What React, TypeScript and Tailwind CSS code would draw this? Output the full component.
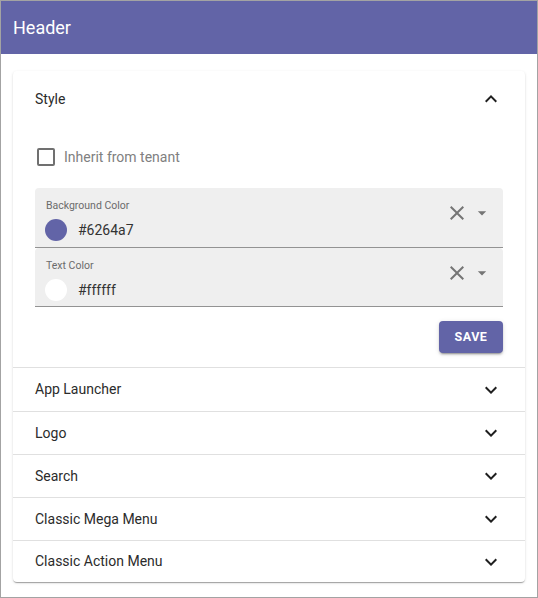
import React from "react";

const font = { fontFamily: "Roboto, 'Liberation Sans', sans-serif" };

function ChevronDown() {
  return (
    <svg width="24" height="24" viewBox="0 0 24 24" className="fill-[#1f1f1f]">
      <path d="M16.59 8.59 12 13.17 7.41 8.59 6 10l6 6 6-6z" />
    </svg>
  );
}

function ChevronUp() {
  return (
    <svg width="24" height="24" viewBox="0 0 24 24" className="fill-[#1f1f1f]">
      <path d="M12 8l-6 6 1.41 1.41L12 10.83l4.59 4.58L18 14z" />
    </svg>
  );
}

function ColorField({ label, value, swatch, tall }: { label: string; value: string; swatch: string; tall?: boolean }) {
  return (
    <div className="flex bg-[#efefef] rounded-t-[4px] border-b border-[#939393]">
      <div className={`flex-1 pl-[11px] pt-[11px] ${tall ? "pb-[6px]" : "pb-[5px]"}`}>
        <div className="text-[10.5px] leading-[13px] text-[#6b6b6b]">{label}</div>
        <div className="mt-[7px] flex items-center h-[22px]">
          <span className={`-ml-[1px] w-[22px] h-[22px] rounded-full ${swatch}`} />
          <span className="ml-[11px] text-[14px] text-[#333333]">{value}</span>
        </div>
      </div>
      <div className="flex items-center gap-[3px] pt-[13px] pr-[11px] self-start h-[37px]">
        <svg width="24" height="24" viewBox="0 0 24 24" className="fill-[#757575]">
          <path d="M19 6.41 17.59 5 12 10.59 6.41 5 5 6.41 10.59 12 5 17.59 6.41 19 12 13.41 17.59 19 19 17.59 13.41 12z" />
        </svg>
        <svg width="20" height="20" viewBox="0 0 24 24" className="fill-[#757575]">
          <path d="M7 10l5 5 5-5z" />
        </svg>
      </div>
    </div>
  );
}

export default function App() {
  const sections = ["App Launcher", "Logo", "Search", "Classic Mega Menu", "Classic Action Menu"];

  return (
    <div style={font} className="w-[538px] h-[598px] border border-[#a3a3a3] bg-white flex flex-col">
      <div className="h-[53px] bg-[#6264a7] flex items-center px-[12px]">
        <h1 className="text-white text-[18px] font-normal">Header</h1>
      </div>

      <div className="px-[12px] pt-[17px]">
        <div className="bg-white rounded-[4px] shadow-[0_2px_1px_-1px_rgba(0,0,0,0.2),0_1px_1px_0_rgba(0,0,0,0.14),0_1px_3px_0_rgba(0,0,0,0.12)]">
          {/* expanded panel */}
          <div>
            <div className="h-[56px] flex items-center justify-between pl-[22px] pr-[22px]">
              <span className="text-[14px] text-[#2b2b2b]">Style</span>
              <ChevronUp />
            </div>
            <div className="px-[22px] pt-[21px] pb-[14px]">
              <label className="flex items-center h-[18px] pl-[2px]">
                <span className="w-[18px] h-[18px] border-2 border-[#707070] rounded-[2px]" />
                <span className="ml-[9px] text-[14px] text-[#808080]">Inherit from tenant</span>
              </label>
              <div className="mt-[22px]">
                <ColorField label="Background Color" value="#6264a7" swatch="bg-[#6264a7]" tall />
                <ColorField label="Text Color" value="#ffffff" swatch="bg-white" />
              </div>
              <div className="flex justify-end mt-[14px]">
                <button className="h-[32px] w-[64px] rounded-[4px] bg-[#6264a7] text-white text-[12.5px] font-bold tracking-[0.5px] shadow-[0_3px_1px_-2px_rgba(0,0,0,0.2),0_2px_2px_0_rgba(0,0,0,0.14),0_1px_5px_0_rgba(0,0,0,0.12)]">
                  SAVE
                </button>
              </div>
            </div>
          </div>

          {sections.map((s, i) => (
            <div
              key={s}
              className={`${i === 0 ? "h-[44px]" : i === sections.length - 1 ? "h-[42px]" : "h-[43px]"} border-t border-[#e0e0e0] flex items-center justify-between px-[22px]`}
            >
              <span className="text-[14px] text-[#2b2b2b]">{s}</span>
              <ChevronDown />
            </div>
          ))}
        </div>
      </div>
    </div>
  );
}
